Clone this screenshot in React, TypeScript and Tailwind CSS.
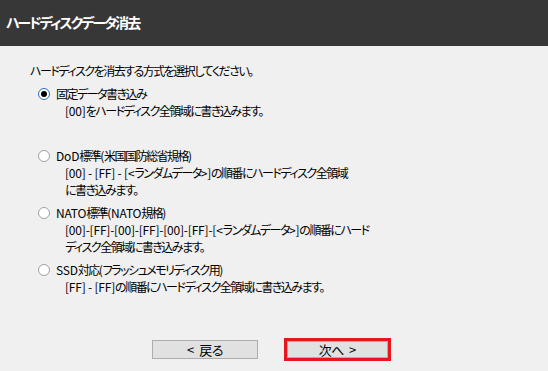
import React from 'react';

interface EraseOption {
    label: string;
    lines: string[];
    checked?: boolean;
    spaceBefore: string;
}

const options: EraseOption[] = [
    {
        label: '固定データ書き込み',
        lines: ['[00]をハードディスク全領域に書き込みます。'],
        checked: true,
        spaceBefore: 'mt-[6px]',
    },
    {
        label: 'DoD標準(米国国防総省規格)',
        lines: ['[00] - [FF] - [<ランダムデータ>]の順番にハードディスク全領域', 'に書き込みます。'],
        spaceBefore: 'mt-[28px]',
    },
    {
        label: 'NATO標準(NATO規格)',
        lines: ['[00]-[FF]-[00]-[FF]-[00]-[FF]-[<ランダムデータ>]の順番にハード', 'ディスク全領域に書き込みます。'],
        spaceBefore: 'mt-[6px]',
    },
    {
        label: 'SSD対応(フラッシュメモリディスク用)',
        lines: ['[FF] - [FF]の順番にハードディスク全領域に書き込みます。'],
        spaceBefore: 'mt-[6px]',
    },
];

// Meiryo UI look: proportional kana, tight kanji, normal Latin
function JpText({ text }: { text: string }) {
    const runs = text.match(/[\x20-\x7e]+|[^\x20-\x7e]+/g) ?? [];
    return (
        <>
            {runs.map((run, i) =>
                /^[\x20-\x7e]+$/.test(run) ? (
                    <span key={i} className="tracking-[-0.2px] whitespace-pre">
                        {run}
                    </span>
                ) : (
                    <span key={i} className="tracking-[-1.5px] [font-feature-settings:'palt']">
                        {run}
                    </span>
                )
            )}
        </>
    );
}

function Radio({ checked }: { checked?: boolean }) {
    return (
        <span
            className={`flex h-[12px] w-[12px] shrink-0 items-center justify-center rounded-full border bg-white ${
                checked ? 'border-[#2a6fb8]' : 'border-[#a0a0a0]'
            }`}
        >
            {checked && <span className="h-[6px] w-[6px] rounded-full bg-black" />}
        </span>
    );
}

export default function App() {
    return (
        <div
            className="flex h-[371px] w-[548px] flex-col bg-[#f0f0f0] text-[12px] leading-[17px] text-black"
            style={{ fontFamily: '"Noto Sans CJK JP", "Noto Sans", sans-serif' }}
        >
            {/* Title bar */}
            <div className="flex h-[46px] shrink-0 items-center bg-[#373737] pl-[6px] pb-[1px] text-[14px] font-bold tracking-[-1.9px] text-white [font-feature-settings:'palt']">
                ハードディスクデータ消去
            </div>

            {/* Body */}
            <div className="flex flex-1 flex-col pl-[30px] pt-[16px]">
                <p>
                    <JpText text="ハードディスクを消去する方式を選択してください。" />
                </p>

                {options.map((opt) => (
                    <div key={opt.label} className={`${opt.spaceBefore} flex flex-col pl-[8px]`}>
                        <div className="flex items-center gap-[6px]">
                            <Radio checked={opt.checked} />
                            <span>
                                <JpText text={opt.label} />
                            </span>
                        </div>
                        {opt.lines.map((line) => (
                            <span key={line} className="pl-[27px]">
                                <JpText text={line} />
                            </span>
                        ))}
                    </div>
                ))}

                {/* Buttons */}
                <div className="mt-auto mb-[10px] flex items-center pl-[122px]">
                    <button className="flex h-[19px] w-[106px] items-center justify-center gap-[5px] border border-[#adadad] bg-[#e1e1e1] text-[13px]">
                        <span>&lt;</span>
                        <span className="tracking-[-0.5px] [font-feature-settings:'palt']">戻る</span>
                    </button>
                    <div className="ml-[26px] border-[3px] border-[#e8141e]">
                        <button className="flex h-[17px] w-[101px] items-center justify-center gap-[5px] border border-[#adadad] bg-[#e1e1e1] text-[13px]">
                            <span className="tracking-[-0.5px] [font-feature-settings:'palt']">次へ</span>
                            <span>&gt;</span>
                        </button>
                    </div>
                </div>
            </div>
        </div>
    );
}
